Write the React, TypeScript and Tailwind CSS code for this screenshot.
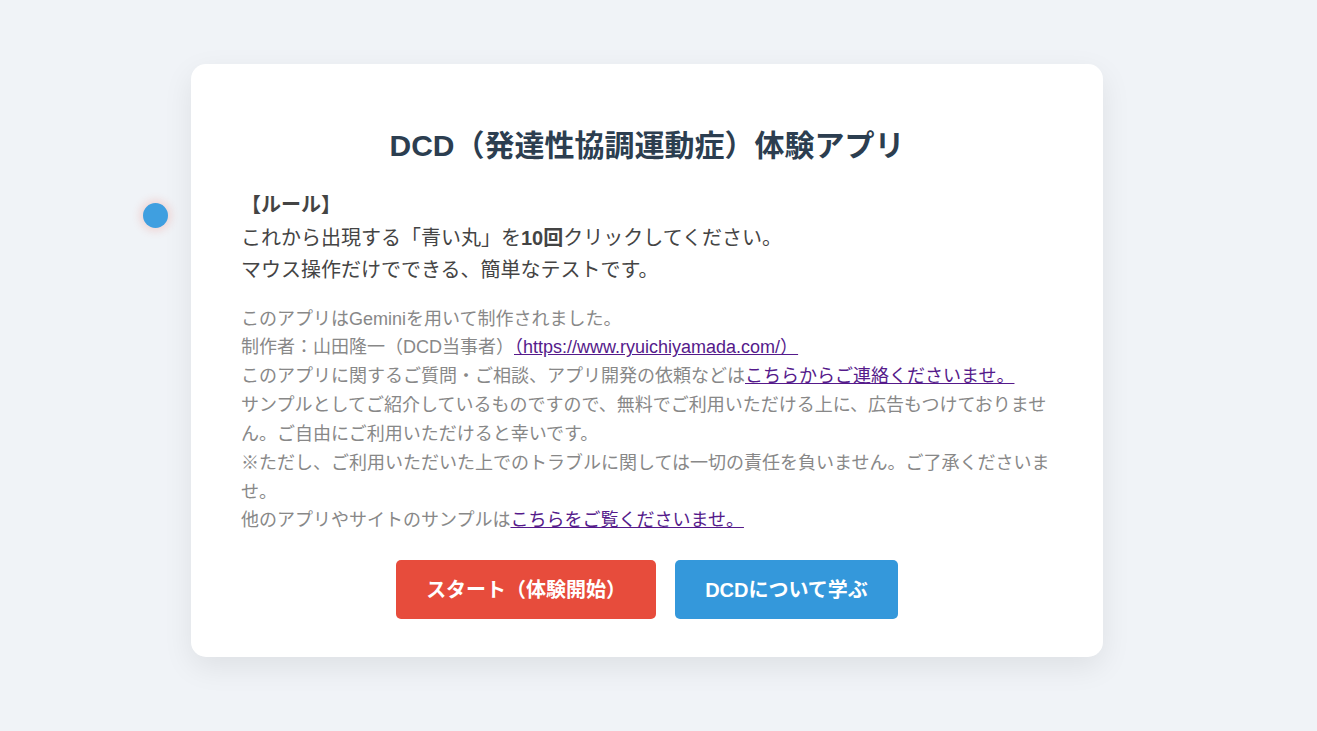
export default function App() {
  return (
    <div
      className="relative min-h-screen bg-[#f0f3f7] pt-16"
      style={{ fontFamily: '"Liberation Sans", "Noto Sans CJK JP", sans-serif' }}
    >
      {/* target dot */}
      <div className="absolute left-[143px] top-[203px] size-[25px] rounded-full bg-[#3f9fe0] shadow-[0_0_8px_3px_rgba(231,76,60,0.18)]" />

      <div className="flex justify-center pr-[23px]">
        <div className="w-[912px] rounded-[15px] bg-white px-[50px] pt-[62px] pb-[38px] shadow-[0_10px_30px_rgba(0,0,0,0.08)]">
          <h1 className="text-center text-[30px] font-bold leading-[40px] text-[#2c3e50]">
            DCD（発達性協調運動症）体験アプリ
          </h1>

          <p className="mt-[23px] text-[20px] leading-[32.5px] text-[#444]">
            <strong>【ルール】</strong>
            <br />
            これから出現する「青い丸」を<strong>10回</strong>クリックしてください。
            <br />
            マウス操作だけでできる、簡単なテストです。
          </p>

          <p className="mt-[18px] text-[18px] leading-[28.85px] text-[#888]">
            このアプリはGeminiを用いて制作されました。
            <br />
            制作者：山田隆一（DCD当事者）
            <a href="#" className="text-[#551a8b] underline">
              （https://www.ryuichiyamada.com/）
            </a>
            <br />
            このアプリに関するご質問・ご相談、アプリ開発の依頼などは
            <a href="#" className="text-[#551a8b] underline">
              こちらからご連絡くださいませ。
            </a>
            <br />
            サンプルとしてご紹介しているものですので、無料でご利用いただける上に、広告もつけておりません。ご自由にご利用いただけると幸いです。
            <br />
            ※ただし、ご利用いただいた上でのトラブルに関しては一切の責任を負いません。ご了承くださいませ。
            <br />
            他のアプリやサイトのサンプルは
            <a href="#" className="text-[#551a8b] underline">
              こちらをご覧くださいませ。
            </a>
          </p>

          <div className="mt-[25px] flex justify-center gap-[19px]">
            <button className="h-[59px] rounded-[5px] bg-[#e74c3c] px-[30px] text-[20px] font-bold text-white">
              スタート（体験開始）
            </button>
            <button className="h-[59px] rounded-[5px] bg-[#3498db] px-[30px] text-[20px] font-bold text-white">
              DCDについて学ぶ
            </button>
          </div>
        </div>
      </div>
    </div>
  );
}
